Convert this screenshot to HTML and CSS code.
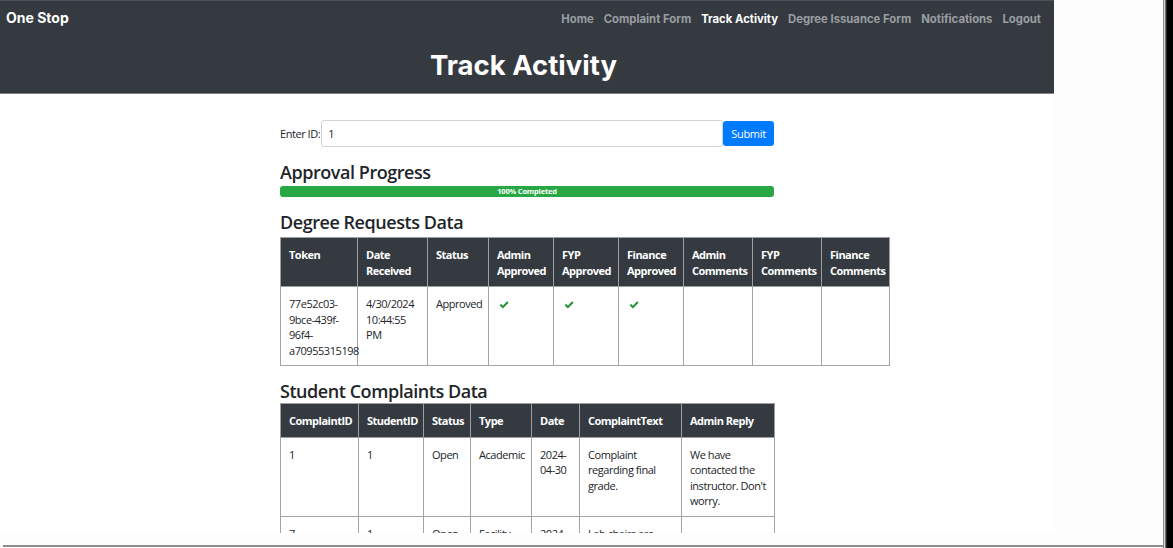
FILE: index.html
```html
<!DOCTYPE html>
<html lang="en">
<head>
<meta charset="utf-8">
<title>Track Activity</title>
<link rel="stylesheet" href="styles.css">
</head>
<body>
<div class="screen">
  <div class="viewport">
    <div class="page">
      <header class="navbar">
        <div class="nav-top">
          <a class="brand" href="#">One Stop</a>
          <nav class="nav-links">
            <a href="#">Home</a>
            <a href="#">Complaint Form</a>
            <a class="active" href="#">Track Activity</a>
            <a href="#">Degree Issuance Form</a>
            <a href="#">Notifications</a>
            <a href="#">Logout</a>
          </nav>
        </div>
        <h1 class="page-title">Track Activity</h1>
      </header>

      <main class="container">
        <form class="id-form">
          <label for="tid">Enter ID:</label>
          <input id="tid" type="text" value="1">
          <button type="button" class="btn-submit">Submit</button>
        </form>

        <h2 class="section-title">Approval Progress</h2>
        <div class="progress"><div class="progress-bar" style="width:100%">100% Completed</div></div>

        <h2 class="section-title">Degree Requests Data</h2>
        <table class="data-table degree-table">
          <colgroup>
            <col style="width:77px"><col style="width:70px"><col style="width:61px"><col style="width:65px"><col style="width:65px"><col style="width:65px"><col style="width:69px"><col style="width:69px"><col style="width:68px">
          </colgroup>
          <thead>
            <tr>
              <th>Token</th><th>Date Received</th><th>Status</th><th>Admin Approved</th><th>FYP Approved</th><th>Finance Approved</th><th>Admin Comments</th><th>FYP Comments</th><th>Finance Comments</th>
            </tr>
          </thead>
          <tbody>
            <tr class="tall-row">
              <td>77e52c03-<br>9bce-439f-<br>96f4-<br>a70955315198</td>
              <td>4/30/2024<br>10:44:55<br>PM</td>
              <td>Approved</td>
              <td><svg class="check" viewBox="0 0 12 10" width="10" height="8"><path d="M0.4 5.4 L2.3 3.6 L4.6 5.8 L9.9 0.4 L11.7 2.2 L4.6 9.4 Z"/></svg></td>
              <td><svg class="check" viewBox="0 0 12 10" width="10" height="8"><path d="M0.4 5.4 L2.3 3.6 L4.6 5.8 L9.9 0.4 L11.7 2.2 L4.6 9.4 Z"/></svg></td>
              <td><svg class="check" viewBox="0 0 12 10" width="10" height="8"><path d="M0.4 5.4 L2.3 3.6 L4.6 5.8 L9.9 0.4 L11.7 2.2 L4.6 9.4 Z"/></svg></td>
              <td></td><td></td><td></td>
            </tr>
          </tbody>
        </table>

        <h2 class="section-title">Student Complaints Data</h2>
        <table class="data-table complaints-table">
          <colgroup>
            <col style="width:78px"><col style="width:65px"><col style="width:47px"><col style="width:61px"><col style="width:48px"><col style="width:102px"><col style="width:93px">
          </colgroup>
          <thead>
            <tr>
              <th>ComplaintID</th><th>StudentID</th><th>Status</th><th>Type</th><th>Date</th><th>ComplaintText</th><th>Admin Reply</th>
            </tr>
          </thead>
          <tbody>
            <tr>
              <td>1</td><td>1</td><td>Open</td><td>Academic</td><td>2024-<br>04-30</td><td>Complaint<br>regarding final<br>grade.</td><td>We have<br>contacted the<br>instructor. Don't<br>worry.</td>
            </tr>
            <tr>
              <td>7</td><td>1</td><td>Open</td><td>Facility</td><td>2024-<br>04-30</td><td>Lab chairs are<br>broken.</td><td></td>
            </tr>
          </tbody>
        </table>
      </main>
    </div>
    <div class="gutter"></div>
  </div>
  <div class="edge"></div>
</div>
<div class="bottom-line"></div>
</body>
</html>
```

FILE: styles.css
```css
* { box-sizing: border-box; }

html, body {
  margin: 0;
  padding: 0;
  background: #ffffff;
  height: 548px;
  overflow: hidden;
}

body {
  font-family: "Open Sans", "Noto Sans", sans-serif;
  color: #212529;
  letter-spacing: -0.45px;
}

.screen {
  display: flex;
  height: 545px;
}

.viewport {
  width: 1163px;
  height: 545px;
  display: flex;
  background: #fdfdfd;
}

.page {
  width: 1054px;
  height: 533px;
  overflow: hidden;
  background: #ffffff;
}

.gutter {
  flex: 1;
  background: #fdfdfd;
}

.edge {
  width: 10px;
  height: 548px;
  background: linear-gradient(to right, #8a8a8a 0, #8a8a8a 1px, #d8d8d8 1px, #d8d8d8 2px, #6e6e6e 2px, #6e6e6e 3px, #2a2a2a 3px, #2a2a2a 4px, #000 4px);
}

.bottom-line {
  height: 2px;
  width: 1160px;
  margin-left: 3px;
  background: #8d8d8d;
}

/* Navbar */
.navbar {
  background: #343a40;
  border-top: 1px solid #4a5056;
  border-bottom: 1px solid #7d8286;
  height: 94px;
  padding: 0 13px 0 6px;
  font-family: "Inter", "DejaVu Sans", sans-serif;
  letter-spacing: 0;
}

.nav-top {
  display: flex;
  justify-content: space-between;
  align-items: center;
  height: 34px;
}

.brand {
  color: #ffffff;
  font-weight: 700;
  font-size: 14px;
  text-decoration: none;
  margin-top: -1px;
}

.nav-links {
  display: flex;
  gap: 10px;
  margin-top: 2px;
}

.nav-links a {
  color: #9a9ea2;
  font-weight: 700;
  font-size: 11.3px;
  text-decoration: none;
}

.nav-links a.active {
  color: #ffffff;
}

.page-title {
  margin: 0;
  text-align: center;
  color: #ffffff;
  font-size: 27.5px;
  font-weight: 700;
  line-height: 32px;
  padding-top: 14px;
}

/* Content */
.container {
  width: 494px;
  margin: 0 auto;
  padding-top: 25px;
}

.id-form {
  display: flex;
  align-items: center;
  height: 28px;
}

.id-form label {
  font-size: 11px;
  margin-right: 1px;
}

.id-form input {
  flex: 1;
  height: 27px;
  border: 1px solid #ced4da;
  border-radius: 3px;
  font-family: "Open Sans", sans-serif;
  font-size: 11px;
  padding: 0 6px;
  color: #212529;
}

.btn-submit {
  width: 51px;
  height: 25px;
  background: #007bff;
  border: none;
  border-radius: 3px;
  color: #ffffff;
  font-family: "Open Sans", sans-serif;
  font-size: 11px;
  letter-spacing: -0.3px;
}

.section-title {
  font-size: 18px;
  font-weight: 600;
  margin: 14px 0 1px;
  line-height: 22px;
  letter-spacing: -0.45px;
}

.progress {
  height: 11px;
  background: #e9ecef;
  border-radius: 3px;
  overflow: hidden;
  margin-top: 3px;
  margin-bottom: 1px;
}

.progress-bar {
  height: 100%;
  background: #28a745;
  color: #ffffff;
  font-size: 7.5px;
  font-weight: 700;
  line-height: 11px;
  text-align: center;
  letter-spacing: -0.2px;
}

.data-table {
  border-collapse: collapse;
  table-layout: fixed;
  font-size: 11px;
  line-height: 15.5px;
  margin-bottom: 8px;
}

.degree-table { width: 609px; margin-top: 4px; }
.complaints-table { width: 494px; }

.data-table th {
  background: #343a40;
  color: #ffffff;
  font-weight: 700;
  text-align: left;
  vertical-align: top;
  padding: 9px 8px 8px;
  border: 1px solid #9c9fa2;
  letter-spacing: -0.5px;
}

.data-table td {
  vertical-align: top;
  padding: 9px 8px 7px;
  border: 1px solid #a3a3a3;
}

.degree-table thead tr { height: 48px; }
.degree-table .tall-row { height: 79px; }
.complaints-table thead tr { height: 33px; }

.check {
  fill: #23902f;
  display: block;
  margin-top: 5px;
  margin-left: 2px;
}
```
